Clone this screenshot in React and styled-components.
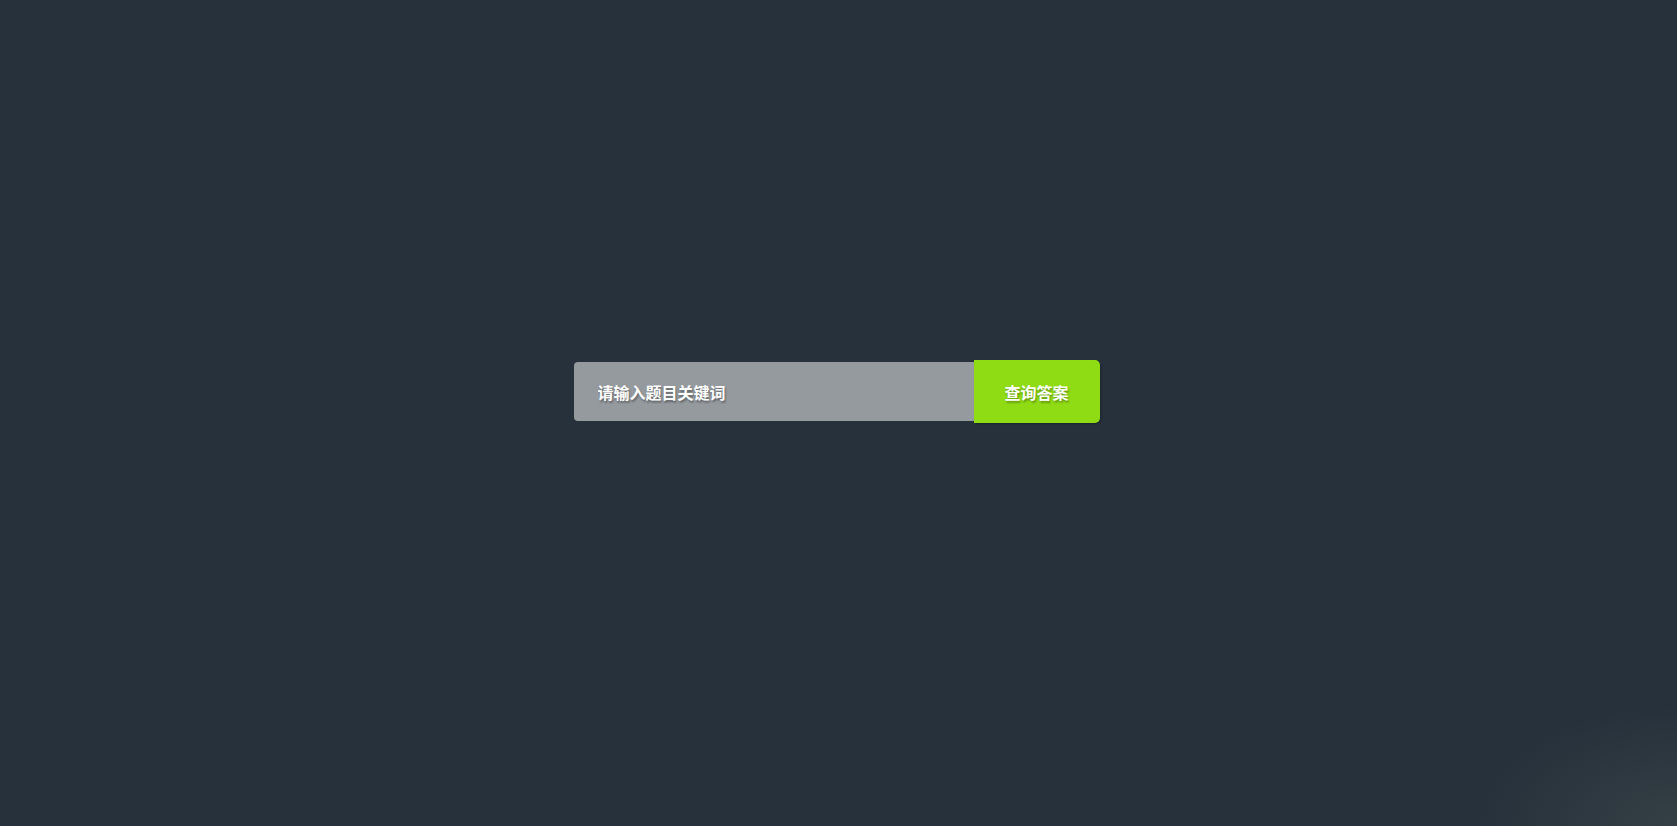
import React from "react";
import styled, { createGlobalStyle } from "styled-components";

const GlobalStyle = createGlobalStyle`
  html, body {
    margin: 0;
    padding: 0;
    height: 100%;
  }
  body {
    background: #27313b;
    font-family: "Noto Sans CJK SC", "Noto Sans", sans-serif;
  }
  #root {
    min-height: 100%;
  }
`;

const Page = styled.main`
  min-height: 100vh;
  box-sizing: border-box;
  padding-top: 360px;
  display: flex;
  justify-content: center;
  align-items: flex-start;
  background:
    radial-gradient(ellipse 200px 120px at 100% 100%, rgba(68, 80, 82, 0.45), rgba(39, 49, 59, 0) 100%),
    #27313b;
`;

const SearchForm = styled.form`
  display: flex;
  align-items: center;
  margin-left: -4px;
`;

const Field = styled.input`
  width: 400px;
  height: 59px;
  box-sizing: border-box;
  padding: 0 24px;
  border: none;
  outline: none;
  border-radius: 4px 0 0 4px;
  background: #959a9f;
  color: #fff;
  font-family: inherit;
  font-size: 16px;
  font-weight: 700;
  text-shadow: 1px 2px 2px rgba(0, 0, 0, 0.35);

  &::placeholder {
    color: #fff;
    opacity: 1;
  }
`;

const SubmitButton = styled.button`
  width: 126px;
  height: 63px;
  border: none;
  border-radius: 0 5px 5px 0;
  background: #8fdb14;
  color: #fff;
  font-family: inherit;
  font-size: 16px;
  font-weight: 700;
  text-shadow: 1px 2px 2px rgba(0, 0, 0, 0.3);
  box-shadow: 1px 1px 2px rgba(0, 0, 0, 0.25);
  cursor: pointer;
`;

const App = () => {
  return (
    <>
      <GlobalStyle />
      <Page>
        <SearchForm onSubmit={(e) => e.preventDefault()}>
          <Field type="text" placeholder="请输入题目关键词" />
          <SubmitButton type="submit">查询答案</SubmitButton>
        </SearchForm>
      </Page>
    </>
  );
};

export default App;
